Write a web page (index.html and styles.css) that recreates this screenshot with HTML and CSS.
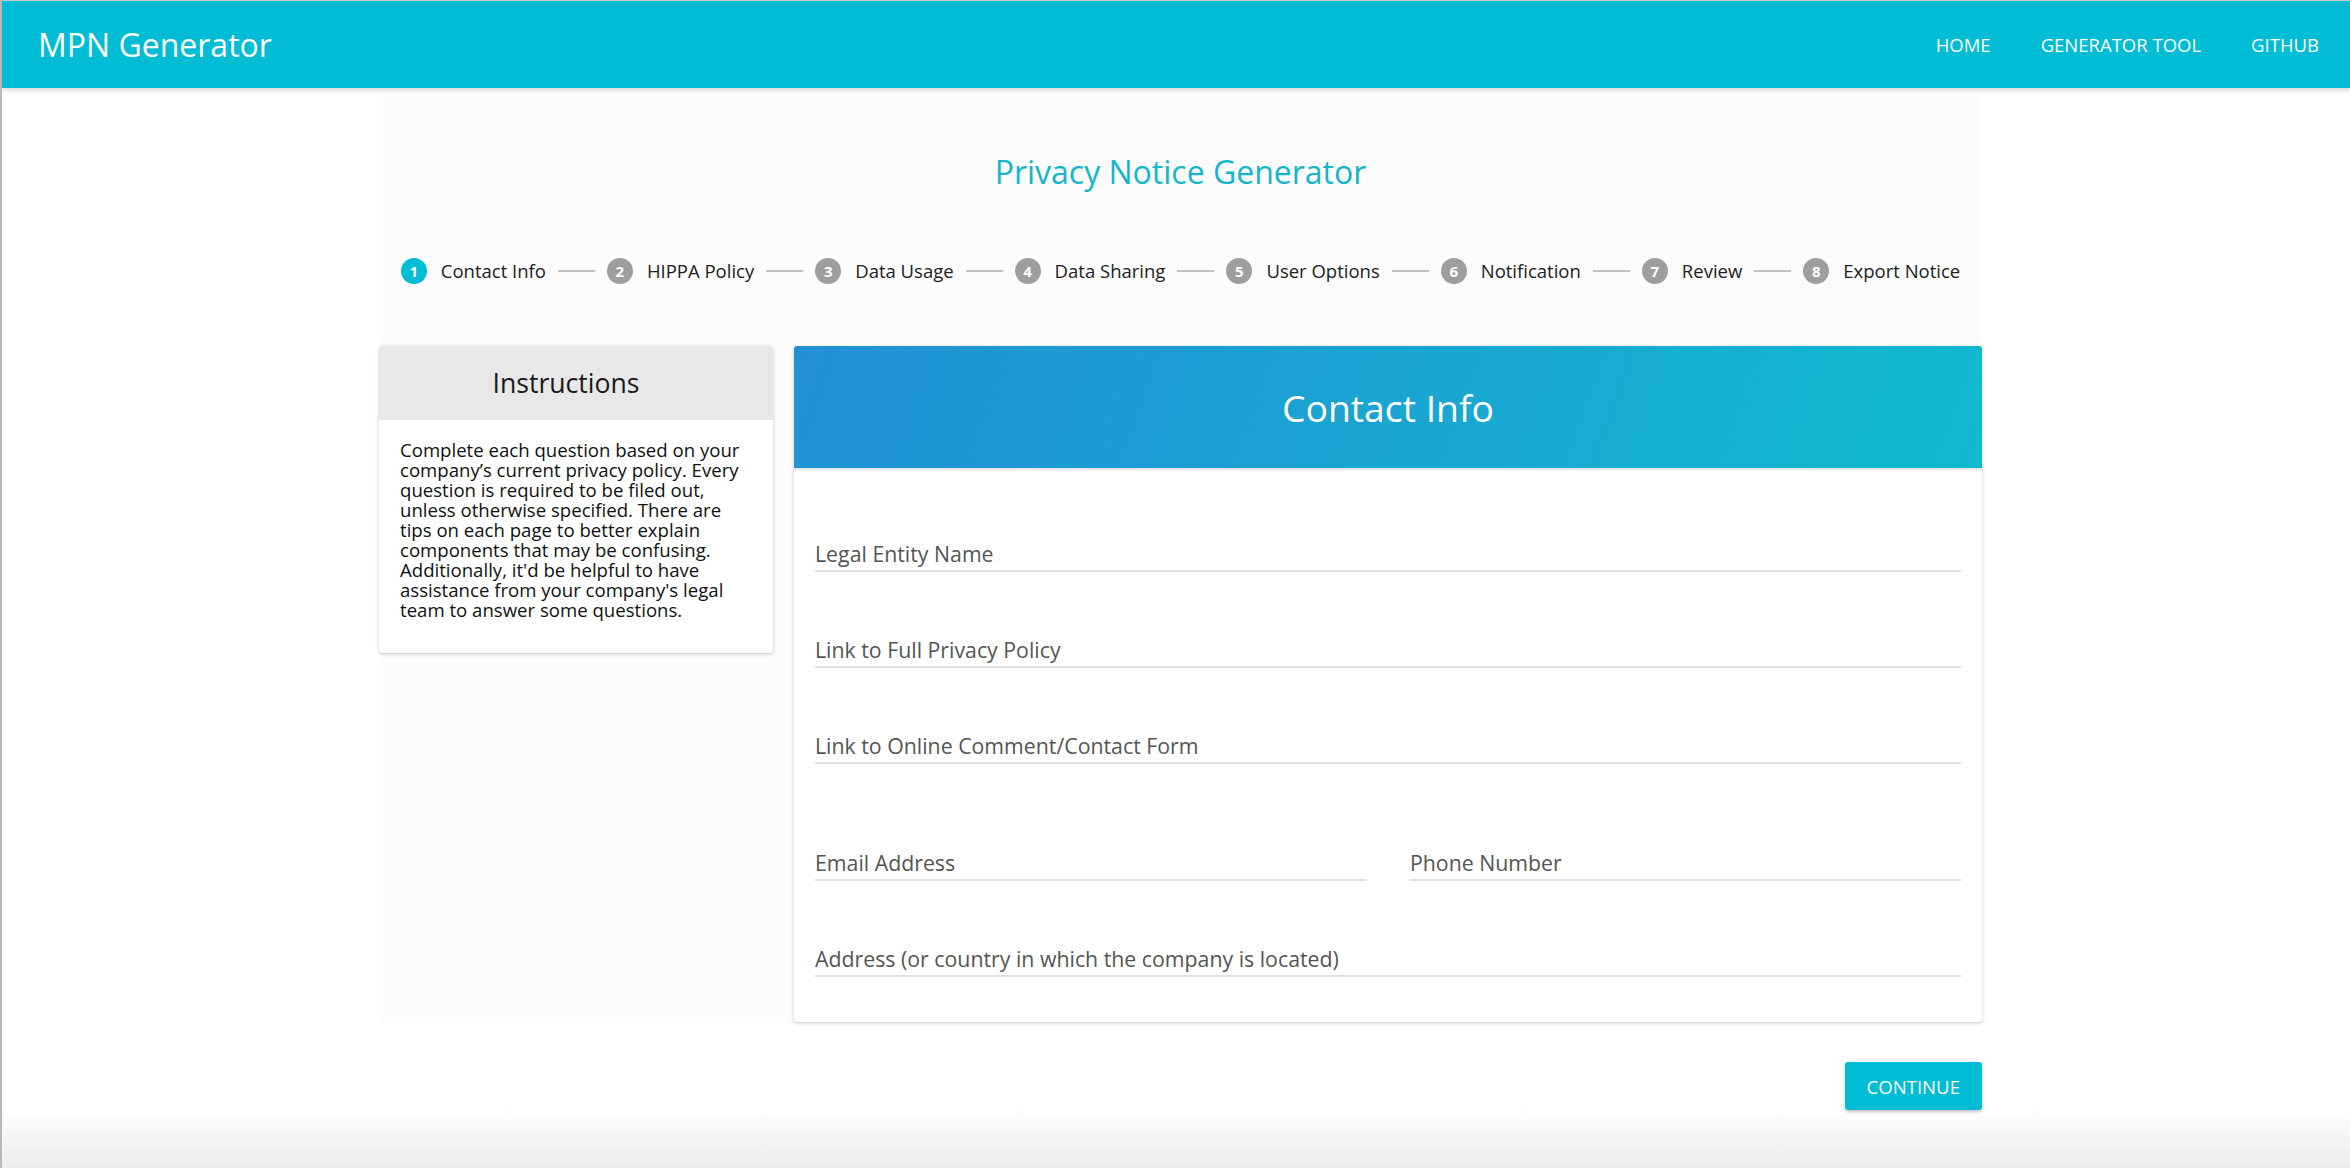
FILE: index.html
```html
<!DOCTYPE html>
<html lang="en">
<head>
<meta charset="utf-8">
<title>MPN Generator</title>
<link rel="stylesheet" href="styles.css">
</head>
<body>
  <nav class="navbar">
    <a class="brand" href="#">MPN Generator</a>
    <ul class="nav-links">
      <li><a href="#">HOME</a></li>
      <li><a href="#">GENERATOR TOOL</a></li>
      <li><a href="#">GITHUB</a></li>
    </ul>
  </nav>

  <main class="page">
    <section class="panel">
      <h1 class="page-title">Privacy Notice Generator</h1>

      <ol class="stepper">
        <li class="step active"><span class="step-num">1</span><span class="step-label">Contact Info</span></li>
        <li class="connector"></li>
        <li class="step"><span class="step-num">2</span><span class="step-label">HIPPA Policy</span></li>
        <li class="connector"></li>
        <li class="step"><span class="step-num">3</span><span class="step-label">Data Usage</span></li>
        <li class="connector"></li>
        <li class="step"><span class="step-num">4</span><span class="step-label">Data Sharing</span></li>
        <li class="connector"></li>
        <li class="step"><span class="step-num">5</span><span class="step-label">User Options</span></li>
        <li class="connector"></li>
        <li class="step"><span class="step-num">6</span><span class="step-label">Notification</span></li>
        <li class="connector"></li>
        <li class="step"><span class="step-num">7</span><span class="step-label">Review</span></li>
        <li class="connector"></li>
        <li class="step"><span class="step-num">8</span><span class="step-label">Export Notice</span></li>
      </ol>

      <div class="cards">
        <aside class="card instructions">
          <div class="instructions-head">Instructions</div>
          <p class="instructions-body">Complete each question based on your company’s current privacy policy. Every question is required to be filed out, unless otherwise specified. There are tips on each page to better explain components that may be confusing. Additionally, it'd be helpful to have assistance from your company's legal team to answer some questions.</p>
        </aside>

        <div class="card form-card">
          <div class="form-head">Contact Info</div>
          <form class="form-body">
            <label class="field"><span class="field-label">Legal Entity Name</span></label>
            <label class="field"><span class="field-label">Link to Full Privacy Policy</span></label>
            <label class="field"><span class="field-label">Link to Online Comment/Contact Form</span></label>
            <div class="field-row">
              <label class="field"><span class="field-label">Email Address</span></label>
              <label class="field"><span class="field-label">Phone Number</span></label>
            </div>
            <label class="field"><span class="field-label">Address (or country in which the company is located)</span></label>
          </form>
        </div>
      </div>
    </section>

    <div class="actions">
      <button class="btn" type="button">CONTINUE</button>
    </div>
  </main>
</body>
</html>
```

FILE: styles.css
```css
* {
  box-sizing: border-box;
}

html {
  height: 100%;
}

body {
  margin: 0;
  min-height: 100%;
  font-family: "Open Sans", "Noto Sans", "DejaVu Sans", sans-serif;
  color: #212121;
  border-left: 2px solid #b9b9b9;
  background: linear-gradient(to bottom, #ffffff 0, #ffffff calc(100% - 60px), #ececec 100%);
  overflow: hidden;
}

/* ---------- navbar ---------- */
.navbar {
  height: 88px;
  border-top: 1px solid #c9c9c9;
  background: #00bcd4;
  display: flex;
  align-items: center;
  justify-content: space-between;
  padding: 0 31px 0 36px;
  box-shadow: 0 2px 5px rgba(0, 0, 0, 0.18);
  position: relative;
  z-index: 2;
}

.brand {
  color: #ffffff;
  text-decoration: none;
  font-size: 32px;
  line-height: 40px;
}

.nav-links {
  list-style: none;
  margin: 0;
  padding: 0;
  display: flex;
  gap: 50px;
}

.nav-links a {
  color: #ffffff;
  text-decoration: none;
  font-size: 18.5px;
  line-height: 30px;
}

/* ---------- page ---------- */
.page {
  padding: 5px 368px 0 377px;
}

.panel {
  background: #fcfcfc;
  padding-top: 57px;
}

.page-title {
  margin: 0;
  text-align: center;
  font-weight: 400;
  font-size: 32px;
  line-height: 44px;
  color: #15b5cb;
}

/* ---------- stepper ---------- */
.stepper {
  list-style: none;
  margin: 62px 0 0;
  padding: 0;
  display: flex;
  justify-content: center;
  align-items: center;
  height: 30px;
}

.step {
  display: flex;
  align-items: center;
  gap: 14px;
}

.step-num {
  width: 26px;
  height: 26px;
  border-radius: 50%;
  background: #9e9e9e;
  color: #ffffff;
  font-size: 15px;
  font-weight: 700;
  display: flex;
  align-items: center;
  justify-content: center;
  line-height: 1;
}

.step.active .step-num {
  background: #00bcd4;
}

.step-label {
  font-size: 18.5px;
  line-height: 26px;
  color: #212121;
}

.connector {
  width: 37px;
  height: 2px;
  background: #c2c2c2;
  margin: 0 12px;
}

/* ---------- cards ---------- */
.cards {
  margin-top: 60px;
  display: flex;
  align-items: flex-start;
  gap: 21px;
}

.card {
  background: #ffffff;
  border-radius: 3px;
  box-shadow: 0 1px 4px rgba(0, 0, 0, 0.16), 0 1px 2px rgba(0, 0, 0, 0.08);
}

.instructions {
  width: 394px;
  flex: none;
  overflow: hidden;
}

.instructions-head {
  height: 74px;
  background: #e8e8e8;
  display: flex;
  align-items: center;
  justify-content: center;
  padding-right: 20px;
  font-size: 26.6px;
  color: #1a1a1a;
}

.instructions-body {
  margin: 0;
  padding: 20px 21px 33px;
  font-size: 18.6px;
  line-height: 20px;
  color: #111111;
}

.form-card {
  flex: 1;
  overflow: hidden;
}

.form-head {
  height: 122px;
  background: linear-gradient(110deg, #2290d6 0%, #1aa5d2 50%, #10b9cf 100%);
  display: flex;
  align-items: center;
  justify-content: center;
  color: #ffffff;
  font-size: 37.3px;
  box-shadow: 0 2px 2px rgba(0, 0, 0, 0.12);
  position: relative;
}

.form-body {
  padding: 8px 21px 45px;
}

.field {
  display: block;
  padding-top: 64px;
  padding-bottom: 2px;
  border-bottom: 2px solid #e0e0e0;
}

.field-label {
  display: block;
  font-size: 21.3px;
  line-height: 28px;
  color: #555555;
}

.field-row {
  display: grid;
  grid-template-columns: 1fr 1fr;
  gap: 44px;
  margin-top: 21px;
}

/* ---------- actions ---------- */
.actions {
  display: flex;
  justify-content: flex-end;
  margin-top: 40px;
}

.btn {
  height: 48px;
  padding: 0 22px;
  border: none;
  border-radius: 3px;
  background: #00bcd4;
  color: #ffffff;
  font-family: "Open Sans", "Noto Sans", sans-serif;
  font-size: 18.6px;
  box-shadow: 0 2px 3px rgba(0, 0, 0, 0.16), 0 1px 5px rgba(0, 0, 0, 0.1);
  cursor: pointer;
}
```
